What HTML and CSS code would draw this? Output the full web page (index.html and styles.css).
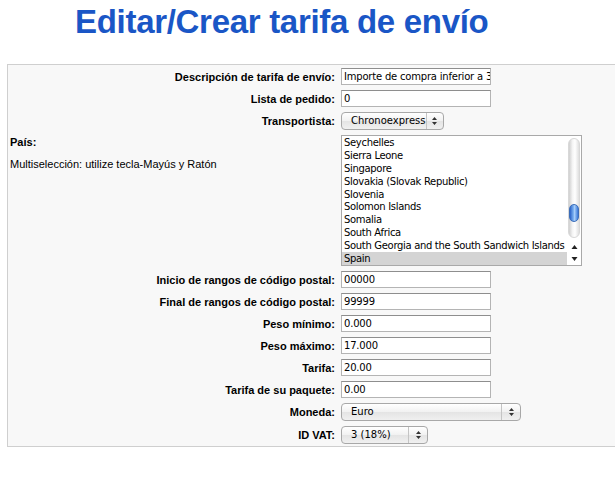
FILE: index.html
```html
<!DOCTYPE html>
<html lang="es">
<head>
<meta charset="utf-8">
<title>Editar/Crear tarifa de envío</title>
<link rel="stylesheet" href="styles.css">
</head>
<body>
<h1 class="title">Editar/Crear tarifa de envío</h1>
<div class="panel">
  <div class="form">
    <div class="label">Descripción de tarifa de envío:</div>
    <div class="field"><div class="input">Importe de compra inferior a 30</div></div>

    <div class="label">Lista de pedido:</div>
    <div class="field"><div class="input">0</div></div>

    <div class="label">Transportista:</div>
    <div class="field"><div class="select w-carrier"><span class="sel-value">Chronoexpress</span><span class="sel-arrows"><svg width="7" height="10" viewBox="0 0 7 10"><path d="M3.5 1 L6 4 L1 4 Z M3.5 9 L6 6 L1 6 Z" fill="#333"/></svg></span></div></div>

    <div class="label label-left">
      <div class="bold">País:</div>
      <div class="hint">Multiselección: utilize tecla-Mayús y Ratón</div>
    </div>
    <div class="field">
      <div class="listbox">
        <ul class="options">
          <li>Seychelles</li>
          <li>Sierra Leone</li>
          <li>Singapore</li>
          <li>Slovakia (Slovak Republic)</li>
          <li>Slovenia</li>
          <li>Solomon Islands</li>
          <li>Somalia</li>
          <li>South Africa</li>
          <li>South Georgia and the South Sandwich Islands</li>
          <li class="selected">Spain</li>
        </ul>
        <div class="scrollbar">
          <div class="track"><div class="thumb"></div></div>
          <div class="arrow"><svg width="7" height="6" viewBox="0 0 7 6"><path d="M3.5 1 L6.5 5 L0.5 5 Z" fill="#222"/></svg></div>
          <div class="arrow"><svg width="7" height="6" viewBox="0 0 7 6"><path d="M3.5 5 L6.5 1 L0.5 1 Z" fill="#222"/></svg></div>
        </div>
      </div>
    </div>

    <div class="label">Inicio de rangos de código postal:</div>
    <div class="field"><div class="input">00000</div></div>

    <div class="label">Final de rangos de código postal:</div>
    <div class="field"><div class="input">99999</div></div>

    <div class="label">Peso mínimo:</div>
    <div class="field"><div class="input">0.000</div></div>

    <div class="label">Peso máximo:</div>
    <div class="field"><div class="input">17.000</div></div>

    <div class="label">Tarifa:</div>
    <div class="field"><div class="input">20.00</div></div>

    <div class="label">Tarifa de su paquete:</div>
    <div class="field"><div class="input">0.00</div></div>

    <div class="label">Moneda:</div>
    <div class="field"><div class="select w-currency"><span class="sel-value">Euro</span><span class="sel-arrows"><svg width="7" height="10" viewBox="0 0 7 10"><path d="M3.5 1 L6 4 L1 4 Z M3.5 9 L6 6 L1 6 Z" fill="#333"/></svg></span></div></div>

    <div class="label">ID VAT:</div>
    <div class="field"><div class="select w-vat"><span class="sel-value">3 (18%)</span><span class="sel-arrows"><svg width="7" height="10" viewBox="0 0 7 10"><path d="M3.5 1 L6 4 L1 4 Z M3.5 9 L6 6 L1 6 Z" fill="#333"/></svg></span></div></div>
  </div>
</div>
</body>
</html>
```

FILE: styles.css
```css
html, body {
  margin: 0;
  padding: 0;
  background: #ffffff;
  overflow: hidden;
}
body {
  font-family: "Liberation Sans", Arial, sans-serif;
  font-size: 11px;
  color: #000;
  width: 615px;
}
.title {
  margin: 0;
  padding: 3px 0 0 75px;
  height: 61px;
  box-sizing: border-box;
  font-family: "Liberation Sans", Arial, sans-serif;
  font-weight: bold;
  font-size: 33px;
  line-height: 38px;
  color: #1a56c6;
  letter-spacing: -0.3px;
}
.panel {
  margin: 3px 0 0 7px;
  width: 700px;
  border: 1px solid #cfcfcf;
  background: #f8f8f8;
  padding: 3px 0 2px 0;
}
.form {
  display: grid;
  grid-template-columns: 327px 400px;
  column-gap: 6px;
  row-gap: 5px;
  align-items: center;
}
.label {
  font-weight: bold;
  text-align: right;
}
.label-left {
  text-align: left;
  align-self: start;
  padding-left: 2px;
  padding-top: 1px;
}
.label-left .hint {
  font-weight: normal;
  margin-top: 10px;
}
.field {
  display: flex;
}
.input {
  width: 150px;
  height: 17px;
  box-sizing: border-box;
  border: 1px solid #b4b4b4;
  border-top-color: #8e8e8e;
  background: #fff;
  font-family: "DejaVu Sans", sans-serif;
  font-size: 10px;
  letter-spacing: -0.2px;
  line-height: 15px;
  padding: 0 2px;
  white-space: nowrap;
  overflow: hidden;
}
.select {
  height: 18px;
  box-sizing: border-box;
  border: 1px solid #a8a8a8;
  border-radius: 4px;
  background: linear-gradient(#ffffff, #f1f1f1 50%, #e4e4e4 51%, #f0f0f0);
  display: flex;
  align-items: center;
  font-family: "DejaVu Sans", sans-serif;
  font-size: 10px;
}
.sel-value {
  flex: 1;
  padding-left: 9px;
  line-height: 16px;
  white-space: nowrap;
}
.sel-arrows {
  width: 18px;
  height: 100%;
  border-left: 1px solid #c4c4c4;
  display: flex;
  align-items: center;
  justify-content: center;
}
.w-carrier { width: 103px; }
.w-currency { width: 180px; }
.w-vat { width: 87px; }
.listbox {
  width: 241px;
  height: 131px;
  box-sizing: border-box;
  border: 1px solid #a9a9a9;
  background: #fff;
  display: flex;
  font-family: "DejaVu Sans", sans-serif;
  font-size: 10px;
  letter-spacing: -0.32px;
}
.options {
  list-style: none;
  margin: 0;
  padding: 0;
  flex: 1;
  min-width: 0;
  overflow: hidden;
}
.options li {
  height: 12.9px;
  line-height: 13px;
  padding-left: 2px;
  white-space: nowrap;
}
.options li.selected {
  background: #d4d4d4;
}
.scrollbar {
  width: 14px;
  flex-shrink: 0;
  display: flex;
  flex-direction: column;
  background: #fff;
}
.track {
  flex: 1;
  margin: 2px 1px 3px 1px;
  border-radius: 7px;
  background: linear-gradient(90deg, #cfcfcf, #f4f4f4 35%, #ffffff 60%, #dedede);
  border: 1px solid #d8d8d8;
  position: relative;
}
.thumb {
  position: absolute;
  left: 0;
  right: 0;
  top: 65px;
  height: 18px;
  border-radius: 6px;
  background: linear-gradient(90deg, #2a62c8, #7fb4f2 45%, #a9d0fb 55%, #3a78d8);
  border: 1px solid #3c6db8;
  box-sizing: border-box;
}
.arrow {
  height: 12px;
  display: flex;
  align-items: center;
  justify-content: center;
}
```
